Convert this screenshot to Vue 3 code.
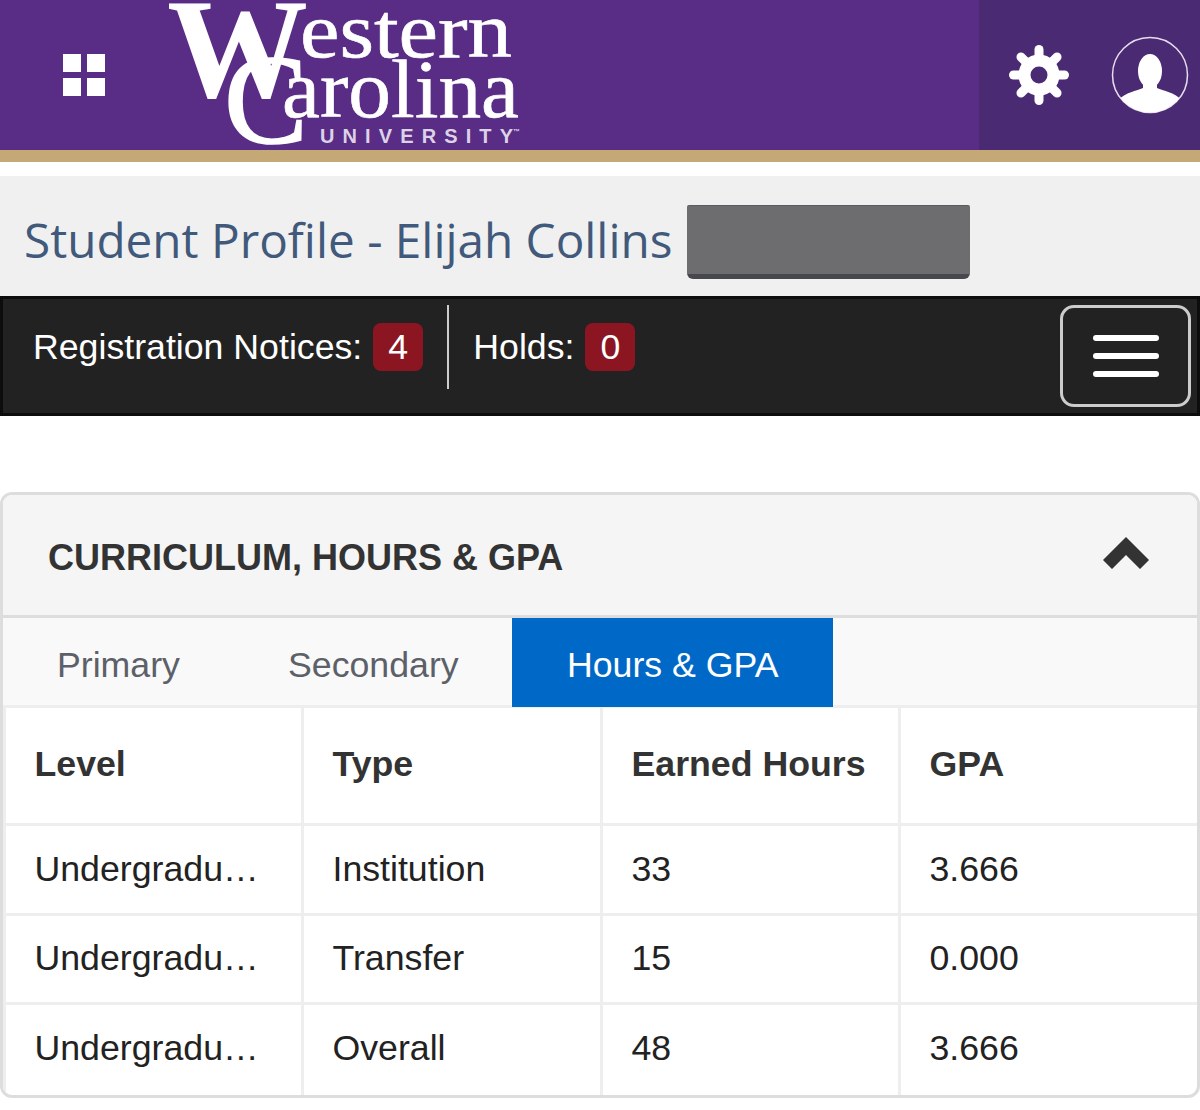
<template>
  <div class="page">
    <header class="topbar">
      <div class="topbar-main">
        <span class="apps-icon">
          <i></i><i></i><i></i><i></i>
        </span>
        <svg class="logo" width="370" height="150" viewBox="0 0 370 150">
          <text x="6" y="97" class="logo-serif bold" font-size="142" textLength="141" lengthAdjust="spacingAndGlyphs">W</text>
          <text x="139" y="57" class="logo-serif thin" font-size="78" textLength="212" lengthAdjust="spacingAndGlyphs">estern</text>
          <text x="121" y="117" class="logo-serif thin" font-size="82" textLength="237" lengthAdjust="spacingAndGlyphs">arolina</text>
          <text x="63" y="143" class="logo-serif heavy" font-size="126" textLength="84" lengthAdjust="spacingAndGlyphs">C</text>
          <text x="159" y="143" class="logo-sans" font-size="20" textLength="193">UNIVERSITY</text>
          <text x="352" y="134" class="logo-sans" font-size="7">™</text>
        </svg>
      </div>
      <div class="topbar-side">
        <svg class="gear" width="64" height="64" viewBox="0 0 64 64">
          <circle cx="32" cy="32" r="14.5" fill="none" stroke="#fff" stroke-width="12" />
          <g stroke="#fff" stroke-width="9" stroke-linecap="round">
            <path v-for="a in teeth" :key="a" d="M32 14V6.5" :transform="`rotate(${a} 32 32)`" />
          </g>
        </svg>
        <svg class="avatar" width="78" height="78" viewBox="0 0 78 78">
          <defs>
            <clipPath id="avatar-clip"><circle cx="39" cy="39" r="37.5" /></clipPath>
          </defs>
          <circle cx="39" cy="39" r="37.5" fill="none" stroke="#e6deee" stroke-width="1.5" />
          <g clip-path="url(#avatar-clip)" fill="#fff">
            <ellipse cx="39" cy="35" rx="12" ry="17" />
            <path d="M32 46h14v6c6 3 18 4 24 12v16H8V64c6-8 18-9 24-12z" />
          </g>
        </svg>
      </div>
    </header>
    <div class="gold"></div>

    <div class="title-bar">
      <h1>Student Profile - Elijah Collins</h1>
      <div class="redacted"></div>
    </div>

    <div class="notice-bar">
      <div class="notice">Registration Notices:<span class="badge">4</span></div>
      <div class="divider"></div>
      <div class="notice">Holds:<span class="badge">0</span></div>
      <button class="menu-btn"><i></i><i></i><i></i></button>
    </div>

    <section class="panel">
      <div class="panel-head">
        <h2>CURRICULUM, HOURS &amp; GPA</h2>
        <svg width="46" height="32" viewBox="0 0 46 32">
          <path d="M23 0L46 23L37 32L23 18L9 32L0 23z" fill="#333" />
        </svg>
      </div>
      <div class="tabs">
        <div class="tab tab-primary">Primary</div>
        <div class="tab tab-secondary">Secondary</div>
        <div class="tab active">Hours &amp; GPA</div>
      </div>
      <div class="table">
        <div class="row head">
          <div v-for="h in headers" :key="h" class="cell">{{ h }}</div>
        </div>
        <div v-for="r in rows" :key="r.type" class="row">
          <div class="cell"><span class="trunc">Undergraduate</span></div>
          <div class="cell">{{ r.type }}</div>
          <div class="cell">{{ r.hours }}</div>
          <div class="cell">{{ r.gpa }}</div>
        </div>
      </div>
    </section>
  </div>
</template>

<script setup>
const teeth = [0, 45, 90, 135, 180, 225, 270, 315]
const headers = ['Level', 'Type', 'Earned Hours', 'GPA']
const rows = [
  { type: 'Institution', hours: '33', gpa: '3.666' },
  { type: 'Transfer', hours: '15', gpa: '0.000' },
  { type: 'Overall', hours: '48', gpa: '3.666' },
]
</script>

<style>
html,
body {
  background: #fff;
}
</style>

<style scoped>
.page {
  width: 1200px;
  height: 1110px;
  overflow: hidden;
  font-family: "Liberation Sans", Arial, sans-serif;
  background: #fff;
}

.topbar {
  display: flex;
  height: 150px;
  background: #592c85;
}

.topbar-main {
  flex: 1;
  display: flex;
  align-items: center;
  padding-left: 63px;
}

.apps-icon {
  display: grid;
  grid-template-columns: 18px 18px;
  grid-template-rows: 18px 18px;
  gap: 6px;
}

.apps-icon i {
  background: #fff;
}

.logo {
  margin-left: 56px;
}

.logo-serif {
  font-family: "Liberation Serif", serif;
  fill: #fff;
}

.logo-serif.bold {
  font-weight: 700;
}

.logo-serif.heavy {
  stroke: #fff;
  stroke-width: 1.5px;
}

.logo-serif.thin {
  stroke: #fff;
  stroke-width: 0.6px;
}

.logo-sans {
  font-family: "Liberation Sans", sans-serif;
  font-weight: 700;
  fill: #dcd3e6;
}

.topbar-side {
  width: 221px;
  display: flex;
  align-items: center;
  gap: 40px;
  padding-left: 28px;
  box-sizing: border-box;
  background: #4a2a73;
}

.gold {
  height: 12px;
  background: #c4a875;
  margin-bottom: 14px;
}

.title-bar {
  height: 120px;
  display: flex;
  align-items: center;
  padding: 6px 0 0 24px;
  box-sizing: border-box;
  background: #f0f0f0;
}

.title-bar h1 {
  margin: 0;
  font-family: "Open Sans", sans-serif;
  font-size: 47.7px;
  font-weight: 400;
  color: #41597b;
}

.redacted {
  width: 283px;
  height: 74px;
  margin: 5px 0 0 15px;
  background: linear-gradient(to bottom, #6d6d6f 0, #6d6d6f 68px, #47474e 68px);
  border-top: 1px solid #5c5c5e;
  box-sizing: border-box;
  border-radius: 2px 2px 6px 6px;
}

.notice-bar {
  height: 120px;
  display: flex;
  align-items: flex-start;
  padding: 6px 6px 0 30px;
  box-sizing: border-box;
  background: #222;
  border: 3px solid #0d0d0d;
}

.notice {
  display: flex;
  align-items: center;
  gap: 11px;
  margin-top: 18px;
  font-size: 35.7px;
  color: #fff;
}

.badge {
  display: flex;
  align-items: center;
  justify-content: center;
  width: 50px;
  height: 48px;
  border-radius: 8px;
  background: #8c1522;
}

.divider {
  width: 2px;
  height: 84px;
  margin: 0 24px;
  background: #ccc;
}

.menu-btn {
  margin-left: auto;
  width: 131px;
  height: 102px;
  padding: 0;
  display: flex;
  flex-direction: column;
  align-items: center;
  justify-content: center;
  gap: 12px;
  background: transparent;
  border: 3px solid #ccc;
  border-radius: 14px;
}

.menu-btn i {
  width: 66px;
  height: 6px;
  border-radius: 3px;
  background: #fff;
}

.panel {
  margin-top: 76px;
  border: 3px solid #ddd;
  border-radius: 12px;
  overflow: hidden;
  background: #fff;
}

.panel-head {
  height: 123px;
  display: flex;
  align-items: center;
  justify-content: space-between;
  padding: 0 48px 0 45px;
  box-sizing: border-box;
  background: #f5f5f5;
  border-bottom: 3px solid #ddd;
}

.panel-head h2 {
  margin: 6px 0 0;
  font-size: 36px;
  font-weight: 700;
  color: #333;
}

.panel-head svg {
  margin-bottom: 5px;
}

.tabs {
  height: 87px;
  display: flex;
  background: #f9f9f9;
  font-size: 35.7px;
}

.tab {
  display: flex;
  align-items: center;
  color: #5c6068;
  padding-top: 7px;
  box-sizing: border-box;
}

.tab-primary {
  padding-left: 54px;
  width: 285px;
}

.tab-secondary {
  width: 224px;
}

.tab.active {
  width: 321px;
  margin-bottom: -2px;
  padding-left: 55px;
  padding-top: 5px;
  position: relative;
  background: #0069c8;
  color: #fff;
}

.table {
  border-top: 3px solid #eee;
}

.row {
  display: grid;
  grid-template-columns: 298px 299px 298px 1fr;
  height: 89.5px;
  border-top: 3px solid #eee;
  box-sizing: border-box;
  color: #222;
  font-size: 35.7px;
}

.row:last-child {
  height: 92.5px;
}

.row:last-child .cell {
  padding-bottom: 3px;
}

.row.head {
  height: 115px;
  border-top: 0;
  font-weight: 700;
  color: #333;
}

.row.head .cell {
  padding-bottom: 3px;
}

.cell {
  display: flex;
  align-items: center;
  padding-left: 28.5px;
  border-left: 3px solid #eee;
  min-width: 0;
}

.trunc {
  display: block;
  width: 230px;
  overflow: hidden;
  white-space: nowrap;
  text-overflow: ellipsis;
}
</style>
